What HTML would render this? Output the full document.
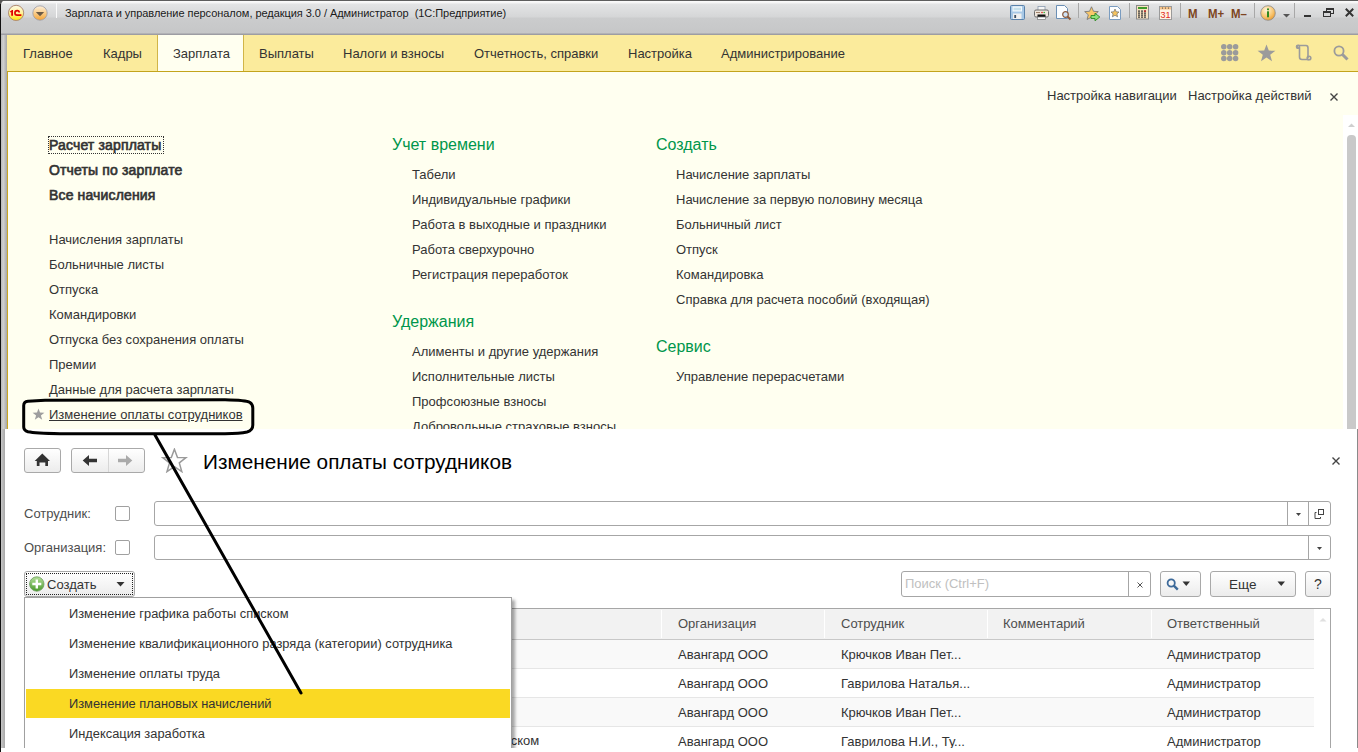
<!DOCTYPE html><html><head><meta charset="utf-8"><style>
*{margin:0;padding:0;box-sizing:border-box}
html,body{width:1358px;height:752px;overflow:hidden;background:#fff;font-family:"Liberation Sans", sans-serif}
.t{position:absolute;white-space:nowrap}
.a{position:absolute}
</style></head><body>
<div class="a" style="left:0;top:0;width:8px;height:8px;background:#555"></div>
<div class="a" style="left:1px;top:0;width:1357px;height:35px;border-top-left-radius:5px;background:linear-gradient(#5e5e5e 0px,#5e5e5e 1px,#fcfcfc 1px,#f4f4f4 3px,#e3e4e5 4px,#d5d6d7 17px,#cbcccd 18px,#c6c7c8 33px,#9d9da3 34px,#9d9da3 35px)"></div>
<div class="a" style="left:1px;top:35px;width:6px;height:394px;background:linear-gradient(90deg,#b9b9b9,#cfcfcf 40%,#a7a7a7)"></div>
<div class="a" style="left:0;top:4px;width:1px;height:748px;background:#111"></div>
<div class="a" style="left:7px;top:35px;width:1351px;height:36px;background:#fbeb9c"></div>
<div class="a" style="left:7px;top:71px;width:1351px;height:1px;background:#c3a41c"></div>
<div class="a" style="left:157px;top:35px;width:87px;height:36px;background:#fffff0;border-left:1px solid #d1b548;border-right:1px solid #d1b548"></div>
<div class="a" style="left:7px;top:72px;width:1351px;height:357px;background:#fffff0"></div>
<div class="a" style="left:7px;top:72px;width:1px;height:357px;background:#c9a623"></div>
<div class="t" style="left:65px;top:7.5px;font-size:11px;line-height:11px;font-weight:normal;color:#1a1a1a;letter-spacing:-0.05px">Зарплата и управление персоналом, редакция 3.0 / Администратор&nbsp;&nbsp;(1С:Предприятие)</div>
<div class="t" style="left:23px;top:47.0px;font-size:13px;line-height:13px;font-weight:normal;color:#333;">Главное</div>
<div class="t" style="left:103px;top:47.0px;font-size:13px;line-height:13px;font-weight:normal;color:#333;">Кадры</div>
<div class="t" style="left:173px;top:47.0px;font-size:13px;line-height:13px;font-weight:normal;color:#333;">Зарплата</div>
<div class="t" style="left:259px;top:47.0px;font-size:13px;line-height:13px;font-weight:normal;color:#333;">Выплаты</div>
<div class="t" style="left:343px;top:47.0px;font-size:13px;line-height:13px;font-weight:normal;color:#333;">Налоги и взносы</div>
<div class="t" style="left:474px;top:47.0px;font-size:13px;line-height:13px;font-weight:normal;color:#333;">Отчетность, справки</div>
<div class="t" style="left:628px;top:47.0px;font-size:13px;line-height:13px;font-weight:normal;color:#333;">Настройка</div>
<div class="t" style="left:721px;top:47.0px;font-size:13px;line-height:13px;font-weight:normal;color:#333;">Администрирование</div>
<div class="t" style="left:1047px;top:89.0px;font-size:13px;line-height:13px;font-weight:normal;color:#333;">Настройка навигации</div>
<div class="t" style="left:1188px;top:89.0px;font-size:13px;line-height:13px;font-weight:normal;color:#333;">Настройка действий</div>
<div class="t" style="left:49px;top:138.0px;font-size:14px;line-height:14px;font-weight:normal;color:#333;letter-spacing:0.15px;-webkit-text-stroke:0.65px #333">Расчет зарплаты</div>
<div class="a" style="left:48px;top:136px;width:116px;height:18px;border:1px dotted #333"></div>
<div class="t" style="left:49px;top:163.0px;font-size:14px;line-height:14px;font-weight:normal;color:#333;letter-spacing:0.15px;-webkit-text-stroke:0.65px #333">Отчеты по зарплате</div>
<div class="t" style="left:49px;top:188.0px;font-size:14px;line-height:14px;font-weight:normal;color:#333;letter-spacing:0.15px;-webkit-text-stroke:0.65px #333">Все начисления</div>
<div class="t" style="left:49px;top:233.0px;font-size:13px;line-height:13px;font-weight:normal;color:#333;">Начисления зарплаты</div>
<div class="t" style="left:49px;top:258.0px;font-size:13px;line-height:13px;font-weight:normal;color:#333;">Больничные листы</div>
<div class="t" style="left:49px;top:283.0px;font-size:13px;line-height:13px;font-weight:normal;color:#333;">Отпуска</div>
<div class="t" style="left:49px;top:308.0px;font-size:13px;line-height:13px;font-weight:normal;color:#333;">Командировки</div>
<div class="t" style="left:49px;top:333.0px;font-size:13px;line-height:13px;font-weight:normal;color:#333;">Отпуска без сохранения оплаты</div>
<div class="t" style="left:49px;top:358.0px;font-size:13px;line-height:13px;font-weight:normal;color:#333;">Премии</div>
<div class="t" style="left:49px;top:383.0px;font-size:13px;line-height:13px;font-weight:normal;color:#333;">Данные для расчета зарплаты</div>
<div class="t" style="left:49px;top:408.0px;font-size:13px;line-height:13px;font-weight:normal;color:#333;text-decoration:underline">Изменение оплаты сотрудников</div>
<div class="t" style="left:392px;top:136.5px;font-size:16px;line-height:16px;font-weight:normal;color:#00964b;">Учет времени</div>
<div class="t" style="left:412px;top:168.0px;font-size:13px;line-height:13px;font-weight:normal;color:#333;">Табели</div>
<div class="t" style="left:412px;top:193.0px;font-size:13px;line-height:13px;font-weight:normal;color:#333;">Индивидуальные графики</div>
<div class="t" style="left:412px;top:218.0px;font-size:13px;line-height:13px;font-weight:normal;color:#333;">Работа в выходные и праздники</div>
<div class="t" style="left:412px;top:243.0px;font-size:13px;line-height:13px;font-weight:normal;color:#333;">Работа сверхурочно</div>
<div class="t" style="left:412px;top:268.0px;font-size:13px;line-height:13px;font-weight:normal;color:#333;">Регистрация переработок</div>
<div class="t" style="left:392px;top:313.5px;font-size:16px;line-height:16px;font-weight:normal;color:#00964b;">Удержания</div>
<div class="t" style="left:412px;top:345.0px;font-size:13px;line-height:13px;font-weight:normal;color:#333;">Алименты и другие удержания</div>
<div class="t" style="left:412px;top:370.0px;font-size:13px;line-height:13px;font-weight:normal;color:#333;">Исполнительные листы</div>
<div class="t" style="left:412px;top:395.0px;font-size:13px;line-height:13px;font-weight:normal;color:#333;">Профсоюзные взносы</div>
<div class="t" style="left:412px;top:420.0px;font-size:13px;line-height:13px;font-weight:normal;color:#333;">Добровольные страховые взносы</div>
<div class="t" style="left:656px;top:136.5px;font-size:16px;line-height:16px;font-weight:normal;color:#00964b;">Создать</div>
<div class="t" style="left:676px;top:168.0px;font-size:13px;line-height:13px;font-weight:normal;color:#333;">Начисление зарплаты</div>
<div class="t" style="left:676px;top:193.0px;font-size:13px;line-height:13px;font-weight:normal;color:#333;">Начисление за первую половину месяца</div>
<div class="t" style="left:676px;top:218.0px;font-size:13px;line-height:13px;font-weight:normal;color:#333;">Больничный лист</div>
<div class="t" style="left:676px;top:243.0px;font-size:13px;line-height:13px;font-weight:normal;color:#333;">Отпуск</div>
<div class="t" style="left:676px;top:268.0px;font-size:13px;line-height:13px;font-weight:normal;color:#333;">Командировка</div>
<div class="t" style="left:676px;top:293.0px;font-size:13px;line-height:13px;font-weight:normal;color:#333;">Справка для расчета пособий (входящая)</div>
<div class="t" style="left:656px;top:338.5px;font-size:16px;line-height:16px;font-weight:normal;color:#00964b;">Сервис</div>
<div class="t" style="left:676px;top:370.0px;font-size:13px;line-height:13px;font-weight:normal;color:#333;">Управление перерасчетами</div>
<div class="a" style="left:5px;top:429px;width:1353px;height:323px;background:#fff"></div>
<div class="a" style="left:1px;top:429px;width:4px;height:319px;background:linear-gradient(90deg,#c6c6c6,#a9a9a9)"></div>
<div class="t" style="left:203px;top:451.0px;font-size:20.75px;line-height:21px;font-weight:normal;color:#000;">Изменение оплаты сотрудников</div>
<div class="t" style="left:24px;top:507.0px;font-size:13px;line-height:13px;font-weight:normal;color:#4d4d4d;">Сотрудник:</div>
<div class="t" style="left:24px;top:541.0px;font-size:13px;line-height:13px;font-weight:normal;color:#4d4d4d;">Организация:</div>
<svg class="a" style="left:7px;top:4px" width="18" height="18" viewBox="0 0 18 18"><defs><linearGradient id="g1c" x1="0" y1="0" x2="0" y2="1"><stop offset="0" stop-color="#fffbe6"/><stop offset="0.5" stop-color="#fff39a"/><stop offset="1" stop-color="#ffe500"/></linearGradient></defs><circle cx="9.1" cy="8.9" r="7.6" fill="url(#g1c)" stroke="#b08a72" stroke-width="1"/><path d="M3 7.6 L5 6 L6 6 L6 11.8 L4.2 11.8 L4.2 8 L3.3 8.4 Z" fill="#e00000"/><path d="M12.2 8.4 C12.2 7 11.2 6.6 10.2 6.6 C8.7 6.6 7.9 7.6 7.9 8.9 C7.9 10.3 8.9 11.1 10.1 11.1 L14.4 11.1" stroke="#e00000" stroke-width="1.6" fill="none"/></svg>
<svg class="a" style="left:32px;top:5px" width="16" height="16" viewBox="0 0 16 16"><defs><linearGradient id="gdd" x1="0" y1="0" x2="0" y2="1"><stop offset="0" stop-color="#fdf0dc"/><stop offset="0.5" stop-color="#f9cd8a"/><stop offset="1" stop-color="#f4a436"/></linearGradient></defs><circle cx="8" cy="8" r="7.2" fill="url(#gdd)" stroke="#9a9aa6" stroke-width="0.8"/><path d="M3.8 7 L12.2 7 L8 11.2 Z" fill="#6b5a45"/></svg>
<div class="a" style="left:56px;top:3px;width:1px;height:15px;background:#b0b0b0;border-right:1px solid #fafafa"></div>
<svg class="a" style="left:1010px;top:5px" width="16" height="16" viewBox="0 0 16 16"><rect x="0.5" y="0.5" width="14" height="14" rx="1" fill="#a7c8e6" stroke="#5a82ab"/><rect x="2.5" y="1.3" width="9.5" height="5.2" fill="#f4f9fd"/><rect x="3.5" y="2.8" width="7.5" height="0.8" fill="#a8cfe0"/><rect x="3.5" y="4.4" width="7.5" height="0.8" fill="#a8cfe0"/><rect x="3" y="8.5" width="8.5" height="5.5" fill="#f0f0f0"/><rect x="4.3" y="10" width="1.8" height="3" fill="#3d4f63"/></svg>
<svg class="a" style="left:1034px;top:6px" width="16" height="15" viewBox="0 0 16 15"><rect x="4" y="0.5" width="7" height="4.5" fill="#f6f6f6" stroke="#8a9bb0" stroke-width="0.8"/><rect x="0.5" y="4" width="14" height="7" rx="1.5" fill="#efe6dc" stroke="#6d6d6d" stroke-width="1"/><rect x="2" y="6" width="4" height="1" fill="#a0826a"/><circle cx="8" cy="6.5" r="0.8" fill="#e02020"/><circle cx="10.2" cy="6.5" r="0.8" fill="#30b030"/><rect x="3.5" y="8.5" width="8" height="2.5" fill="#111"/><rect x="3.5" y="11" width="8" height="2.5" fill="#fff" stroke="#777" stroke-width="0.7"/></svg>
<svg class="a" style="left:1056px;top:5px" width="16" height="16" viewBox="0 0 16 16"><path d="M0.5 0.5 L8.5 0.5 L11.5 3.5 L11.5 13.5 L0.5 13.5 Z" fill="#fbfdff" stroke="#6b8fb5" stroke-width="1"/><circle cx="9.5" cy="9.5" r="2.8" fill="#cfe3f7" stroke="#8b5a3c" stroke-width="1.2"/><path d="M11.5 11.5 L14.5 14.5" stroke="#8b5a3c" stroke-width="2"/></svg>
<div class="a" style="left:1078px;top:3px;width:1px;height:15px;background:#a8a8a8"></div>
<svg class="a" style="left:1084px;top:6px" width="17" height="16" viewBox="0 0 17 16"><path d="M7.5 0.8 L9.5 5.3 L14.3 5.6 L10.7 8.8 L11.9 13.5 L7.5 11 L3.1 13.5 L4.3 8.8 L0.7 5.6 L5.5 5.3 Z" fill="#f9c86a" stroke="#7a7a7a" stroke-width="0.9"/><path d="M7 9.5 L11 9.5 L11 7.2 L15.8 11 L11 14.8 L11 12.5 L7 12.5 Z" fill="#8fe07a" stroke="#2e8a22" stroke-width="0.9"/></svg>
<svg class="a" style="left:1109px;top:6px" width="13" height="15" viewBox="0 0 13 15"><path d="M0.5 0.5 L8.5 0.5 L11.5 3.5 L11.5 13.5 L0.5 13.5 Z" fill="#fdfeff" stroke="#7a9cc0" stroke-width="1"/><path d="M6 3 L7.2 5.8 L10 6 L7.9 7.9 L8.6 10.8 L6 9.3 L3.4 10.8 L4.1 7.9 L2 6 L4.8 5.8 Z" fill="#f6c45e" stroke="#707070" stroke-width="0.7"/></svg>
<div class="a" style="left:1129px;top:3px;width:1px;height:15px;background:#a8a8a8"></div>
<svg class="a" style="left:1136px;top:5px" width="13" height="15" viewBox="0 0 13 15"><rect x="0.5" y="0.5" width="12" height="13.5" fill="#f9e3c2" stroke="#8a8a8a" stroke-width="1"/><rect x="2" y="2" width="9" height="2" fill="#3f9a2a"/><rect x="2" y="5.5" width="2" height="1.2" fill="#333"/><rect x="5" y="5.5" width="2" height="1.2" fill="#333"/><rect x="8" y="5.5" width="2" height="1.2" fill="#333"/><rect x="2" y="7.5" width="2" height="1.2" fill="#333"/><rect x="5" y="7.5" width="2" height="1.2" fill="#333"/><rect x="8" y="7.5" width="2" height="1.2" fill="#333"/><rect x="2" y="9.5" width="2" height="1.2" fill="#333"/><rect x="5" y="9.5" width="2" height="1.2" fill="#333"/><rect x="8" y="9.5" width="2" height="1.2" fill="#333"/><rect x="2" y="11.5" width="2" height="1.2" fill="#333"/><rect x="5" y="11.5" width="2" height="1.2" fill="#333"/><rect x="8" y="11.5" width="2" height="1.2" fill="#333"/><rect x="8" y="5.5" width="2" height="1.2" fill="#e02020"/></svg>
<svg class="a" style="left:1159px;top:6px" width="13" height="14" viewBox="0 0 13 14"><rect x="0.5" y="0.5" width="12" height="13" fill="#fff4e6" stroke="#9a9a9a" stroke-width="1"/><rect x="1" y="1" width="11" height="2.5" fill="#f7c48a"/><circle cx="3.5" cy="2" r="0.6" fill="#333"/><circle cx="6.5" cy="2" r="0.6" fill="#333"/><circle cx="9.5" cy="2" r="0.6" fill="#333"/><text x="6.5" y="12" font-family="Liberation Sans" font-size="9" fill="#e02a1a" text-anchor="middle">31</text></svg>
<div class="a" style="left:1180px;top:3px;width:1px;height:15px;background:#a8a8a8"></div>
<div class="t" style="left:1188px;top:7.0px;font-size:13px;line-height:13px;font-weight:bold;color:#7d4521;transform:scaleX(0.88);transform-origin:0 0">M</div>
<div class="t" style="left:1208px;top:7.0px;font-size:13px;line-height:13px;font-weight:bold;color:#7d4521;transform:scaleX(0.88);transform-origin:0 0">M+</div>
<div class="t" style="left:1231px;top:7.0px;font-size:13px;line-height:13px;font-weight:bold;color:#7d4521;transform:scaleX(0.88);transform-origin:0 0">M&#8211;</div>
<div class="a" style="left:1254px;top:3px;width:1px;height:15px;background:#a8a8a8"></div>
<svg class="a" style="left:1260px;top:5px" width="16" height="17" viewBox="0 0 16 17"><defs><radialGradient id="gin" cx="0.4" cy="0.3" r="0.8"><stop offset="0" stop-color="#fff6dc"/><stop offset="0.6" stop-color="#f8c36b"/><stop offset="1" stop-color="#e8901f"/></radialGradient></defs><circle cx="8" cy="8" r="7.3" fill="url(#gin)" stroke="#8c8c8c" stroke-width="0.8"/><rect x="7" y="6.3" width="2" height="6" fill="#2f8a1f"/><circle cx="8" cy="4.3" r="1.1" fill="#2f8a1f"/></svg>
<svg class="a" style="left:1283px;top:14px" width="7" height="4" viewBox="0 0 7 4"><path d="M0 0 L7 0 L3.5 3.5 Z" fill="#555"/></svg>
<div class="a" style="left:1294px;top:3px;width:1px;height:15px;background:#a8a8a8"></div>
<div class="a" style="left:1304px;top:15px;width:7px;height:2px;background:#333"></div>
<div class="a" style="left:1326px;top:8px;width:8px;height:6px;border:1.5px solid #333;border-top-width:2px"></div>
<div class="a" style="left:1323px;top:11px;width:8px;height:6px;border:1.5px solid #333;border-top-width:2px;background:#d5d6d7"></div>
<svg class="a" style="left:1345px;top:8px" width="9" height="9" viewBox="0 0 9 9"><path d="M0.8 0.8 L8.2 8.2 M8.2 0.8 L0.8 8.2" stroke="#333" stroke-width="2"/></svg>
<svg class="a" style="left:1221px;top:44px" width="18" height="18" viewBox="0 0 18 18"><circle cx="2.8" cy="2.8" r="2.75" fill="#9b9b9b"/><circle cx="8.7" cy="2.8" r="2.75" fill="#9b9b9b"/><circle cx="14.600000000000001" cy="2.8" r="2.75" fill="#9b9b9b"/><circle cx="2.8" cy="8.7" r="2.75" fill="#9b9b9b"/><circle cx="8.7" cy="8.7" r="2.75" fill="#9b9b9b"/><circle cx="14.600000000000001" cy="8.7" r="2.75" fill="#9b9b9b"/><circle cx="2.8" cy="14.600000000000001" r="2.75" fill="#9b9b9b"/><circle cx="8.7" cy="14.600000000000001" r="2.75" fill="#9b9b9b"/><circle cx="14.600000000000001" cy="14.600000000000001" r="2.75" fill="#9b9b9b"/></svg>
<svg class="a" style="left:1257px;top:44px" width="19" height="18" viewBox="0 0 19 18"><path d="M9.5 0.6 L11.8 6.6 L18.4 6.8 L13.2 10.8 L15 17.3 L9.5 13.6 L4 17.3 L5.8 10.8 L0.6 6.8 L7.2 6.6 Z" fill="#9b9b9b"/></svg>
<svg class="a" style="left:1295px;top:44px" width="18" height="18" viewBox="0 0 18 18" fill="none" stroke="#9b9b9b" stroke-width="1.6"><path d="M3.5 1.5 L11 1.5 C12.5 1.5 13 2.5 13 4 L13 14" /><path d="M3.5 1.5 C2 1.5 1.5 3 2.5 4 L4.5 4 L4.5 13 C4.5 15 5.5 15.5 7 15.5 L14 15.5"/><circle cx="14" cy="14" r="1.8"/><circle cx="3" cy="2.8" r="1.5"/></svg>
<svg class="a" style="left:1333px;top:45px" width="17" height="17" viewBox="0 0 17 17" fill="none" stroke="#9b9b9b"><circle cx="6" cy="6" r="4.6" stroke-width="1.8"/><path d="M9.5 9.5 L14.5 14.5" stroke-width="3"/></svg>
<svg class="a" style="left:1330px;top:93px" width="8" height="8" viewBox="0 0 8 8"><path d="M0.5 0.5 L7.5 7.5 M7.5 0.5 L0.5 7.5" stroke="#444" stroke-width="1.4"/></svg>
<div class="a" style="left:1343px;top:115px;width:15px;height:314px;background:#fff"></div>
<svg class="a" style="left:1347px;top:122px" width="9" height="6" viewBox="0 0 9 6"><path d="M1 5 L4.5 1.5 L8 5 Z" fill="#cfcfcf"/></svg>
<div class="a" style="left:1347px;top:135px;width:9px;height:294px;background:#c9c9c9;border-radius:4px 4px 0 0"></div>
<svg class="a" style="left:32px;top:408px" width="13" height="13" viewBox="0 0 13 13"><path d="M6.5 0.5 L8 4.6 L12.4 4.7 L8.9 7.4 L10.2 11.8 L6.5 9.3 L2.8 11.8 L4.1 7.4 L0.6 4.7 L5 4.6 Z" fill="#9e9e9e"/></svg>
<div class="a" style="left:1357px;top:429px;width:1px;height:323px;background:#8a8a8a"></div>
<div class="a" style="left:24px;top:448px;width:37px;height:25px;background:linear-gradient(#ffffff,#ececec);border:1px solid #a9a9a9;border-radius:3px;"></div>
<svg class="a" style="left:34px;top:453px" width="17" height="14" viewBox="0 0 17 14"><path d="M8.3 0.5 L16 8 L14 8 L14 13 L11.3 13 L11.3 9.5 L5.5 9.5 L5.5 13 L2.8 13 L2.8 8 L0.7 8 Z" fill="#333"/></svg>
<div class="a" style="left:71px;top:448px;width:74px;height:25px;background:linear-gradient(#ffffff,#ececec);border:1px solid #a9a9a9;border-radius:3px;"></div>
<div class="a" style="left:108px;top:449px;width:1px;height:23px;background:#d6d6d6"></div>
<svg class="a" style="left:82px;top:454px" width="16" height="13" viewBox="0 0 16 13"><path d="M0.7 6.5 L7 1 L7 4.8 L15 4.8 L15 8.2 L7 8.2 L7 12 Z" fill="#333"/></svg>
<svg class="a" style="left:117px;top:454px" width="16" height="13" viewBox="0 0 16 13"><path d="M15.3 6.5 L9 1 L9 4.8 L1 4.8 L1 8.2 L9 8.2 L9 12 Z" fill="#aaa"/></svg>
<svg class="a" style="left:161px;top:448px" width="27" height="25" viewBox="0 0 27 25"><path d="M13.4 1.3 L16.5 9.4 L25 9.6 L18.3 14.9 L20.8 23.6 L13.4 18.6 L6 23.6 L8.5 14.9 L1.8 9.6 L10.3 9.4 Z" fill="#fff" stroke="#9a9a9a" stroke-width="1.5" stroke-linejoin="miter"/></svg>
<svg class="a" style="left:1332px;top:457px" width="8" height="8" viewBox="0 0 8 8"><path d="M0.5 0.5 L7.5 7.5 M7.5 0.5 L0.5 7.5" stroke="#444" stroke-width="1.4"/></svg>
<div class="a" style="left:115px;top:506px;width:15px;height:15px;border:1px solid #a0a0a0;border-radius:2px;background:#fff"></div>
<div class="a" style="left:115px;top:540px;width:15px;height:15px;border:1px solid #a0a0a0;border-radius:2px;background:#fff"></div>
<div class="a" style="left:154px;top:501px;width:1177px;height:25px;border:1px solid #a6a6a6;border-radius:3px;background:#fff;"></div>
<div class="a" style="left:1287px;top:502px;width:1px;height:23px;background:#a6a6a6"></div>
<div class="a" style="left:1308px;top:502px;width:1px;height:23px;background:#a6a6a6"></div>
<svg class="a" style="left:1296px;top:513px" width="5" height="3" viewBox="0 0 5 3"><path d="M0 0 L5 0 L2.5 3 Z" fill="#444"/></svg>
<svg class="a" style="left:1314px;top:509px" width="11" height="11" viewBox="0 0 11 11" fill="none" stroke="#444" stroke-width="1"><rect x="4.5" y="0.5" width="5" height="5"/><path d="M2.5 3.5 L1 3.5 L1 9.5 L6.5 9.5 L6.5 8"/></svg>
<div class="a" style="left:154px;top:535px;width:1177px;height:25px;border:1px solid #a6a6a6;border-radius:3px;background:#fff;"></div>
<div class="a" style="left:1308px;top:536px;width:1px;height:23px;background:#a6a6a6"></div>
<svg class="a" style="left:1317px;top:547px" width="5" height="3" viewBox="0 0 5 3"><path d="M0 0 L5 0 L2.5 3 Z" fill="#444"/></svg>
<div class="a" style="left:24px;top:571px;width:111px;height:26px;background:linear-gradient(#ffffff,#ececec);border:1px solid #a9a9a9;border-radius:3px;"></div>
<div class="a" style="left:26px;top:573px;width:107px;height:22px;border:1px dotted #222"></div>
<svg class="a" style="left:29px;top:576px" width="16" height="16" viewBox="0 0 16 16"><defs><linearGradient id="gpl" x1="0" y1="0" x2="0" y2="1"><stop offset="0" stop-color="#b5e09a"/><stop offset="1" stop-color="#4a9a2c"/></linearGradient></defs><circle cx="7.8" cy="8" r="7.2" fill="url(#gpl)" stroke="#6a9a5a" stroke-width="0.8"/><path d="M6.6 3.5 H9 V6.8 H12.3 V9.2 H9 V12.5 H6.6 V9.2 H3.3 V6.8 H6.6 Z" fill="#fff"/></svg>
<div class="t" style="left:47px;top:578.0px;font-size:13px;line-height:13px;font-weight:normal;color:#333;">Создать</div>
<svg class="a" style="left:116px;top:582px" width="9" height="5" viewBox="0 0 9 5"><path d="M0.5 0 L8.5 0 L4.5 4.5 Z" fill="#333"/></svg>
<div class="a" style="left:901px;top:571px;width:250px;height:26px;border:1px solid #a6a6a6;border-radius:3px;background:#fff;"></div>
<div class="a" style="left:1128px;top:572px;width:1px;height:24px;background:#a6a6a6"></div>
<div class="t" style="left:905px;top:577.0px;font-size:13px;line-height:13px;font-weight:normal;color:#c0c0c0;">Поиск (Ctrl+F)</div>
<svg class="a" style="left:1137px;top:582px" width="6" height="6" viewBox="0 0 6 6"><path d="M0.5 0.5 L5.5 5.5 M5.5 0.5 L0.5 5.5" stroke="#555" stroke-width="1"/></svg>
<div class="a" style="left:1160px;top:571px;width:41px;height:26px;background:linear-gradient(#ffffff,#ececec);border:1px solid #a9a9a9;border-radius:3px;"></div>
<svg class="a" style="left:1166px;top:578px" width="14" height="13" viewBox="0 0 14 13" fill="none" stroke="#3d6a9a"><circle cx="5.2" cy="5" r="3.6" stroke-width="1.8"/><path d="M7.8 7.6 L11.8 11.6" stroke-width="2.4"/></svg>
<svg class="a" style="left:1182px;top:581px" width="9" height="6" viewBox="0 0 9 6"><path d="M0.5 0.5 L8 0.5 L4.25 5 Z" fill="#333"/></svg>
<div class="a" style="left:1210px;top:571px;width:86px;height:26px;background:linear-gradient(#ffffff,#ececec);border:1px solid #a9a9a9;border-radius:3px;"></div>
<div class="t" style="left:1229px;top:577.5px;font-size:13.5px;line-height:14px;font-weight:normal;color:#333;">Еще</div>
<svg class="a" style="left:1277px;top:581px" width="9" height="6" viewBox="0 0 9 6"><path d="M0.5 0.5 L8 0.5 L4.25 5 Z" fill="#333"/></svg>
<div class="a" style="left:1305px;top:571px;width:26px;height:26px;background:linear-gradient(#ffffff,#ececec);border:1px solid #a9a9a9;border-radius:3px;"></div>
<div class="t" style="left:1314px;top:577.0px;font-size:14px;line-height:14px;font-weight:normal;color:#333;">?</div>
<div class="a" style="left:24px;top:608px;width:1307px;height:144px;border:1px solid #a6a6a6;border-bottom:none;background:#fff"></div>
<div class="a" style="left:25px;top:609px;width:1289px;height:31px;background:#f2f2f2;border-bottom:1px solid #c8c8c8"></div>
<div class="a" style="left:661px;top:610px;width:1px;height:28px;background:#d9d9d9;border-right:1px solid #fff"></div>
<div class="a" style="left:824px;top:610px;width:1px;height:28px;background:#d9d9d9;border-right:1px solid #fff"></div>
<div class="a" style="left:987px;top:610px;width:1px;height:28px;background:#d9d9d9;border-right:1px solid #fff"></div>
<div class="a" style="left:1151px;top:610px;width:1px;height:28px;background:#d9d9d9;border-right:1px solid #fff"></div>
<svg class="a" style="left:1319px;top:617px" width="8" height="5" viewBox="0 0 8 5"><path d="M0.5 4.5 L4 1 L7.5 4.5 Z" fill="#e0e0e0"/></svg>
<div class="t" style="left:678px;top:617.0px;font-size:13px;line-height:13px;font-weight:normal;color:#4d4d4d;">Организация</div>
<div class="t" style="left:841px;top:617.0px;font-size:13px;line-height:13px;font-weight:normal;color:#4d4d4d;">Сотрудник</div>
<div class="t" style="left:1003px;top:617.0px;font-size:13px;line-height:13px;font-weight:normal;color:#4d4d4d;">Комментарий</div>
<div class="t" style="left:1167px;top:617.0px;font-size:13px;line-height:13px;font-weight:normal;color:#4d4d4d;">Ответственный</div>
<div class="a" style="left:25px;top:640px;width:1289px;height:29px;background:#f9f9f9;border-bottom:1px solid #e6e6e6"></div>
<div class="t" style="left:678px;top:648.0px;font-size:13px;line-height:13px;font-weight:normal;color:#333;">Авангард ООО</div>
<div class="t" style="left:841px;top:648.0px;font-size:13px;line-height:13px;font-weight:normal;color:#333;">Крючков Иван Пет...</div>
<div class="t" style="left:1167px;top:648.0px;font-size:13px;line-height:13px;font-weight:normal;color:#333;">Администратор</div>
<div class="a" style="left:25px;top:669px;width:1289px;height:29px;background:#fff;border-bottom:1px solid #e6e6e6"></div>
<div class="t" style="left:678px;top:677.0px;font-size:13px;line-height:13px;font-weight:normal;color:#333;">Авангард ООО</div>
<div class="t" style="left:841px;top:677.0px;font-size:13px;line-height:13px;font-weight:normal;color:#333;">Гаврилова Наталья...</div>
<div class="t" style="left:1167px;top:677.0px;font-size:13px;line-height:13px;font-weight:normal;color:#333;">Администратор</div>
<div class="a" style="left:25px;top:698px;width:1289px;height:29px;background:#f9f9f9;border-bottom:1px solid #e6e6e6"></div>
<div class="t" style="left:678px;top:706.0px;font-size:13px;line-height:13px;font-weight:normal;color:#333;">Авангард ООО</div>
<div class="t" style="left:841px;top:706.0px;font-size:13px;line-height:13px;font-weight:normal;color:#333;">Крючков Иван Пет...</div>
<div class="t" style="left:1167px;top:706.0px;font-size:13px;line-height:13px;font-weight:normal;color:#333;">Администратор</div>
<div class="a" style="left:25px;top:727px;width:1289px;height:29px;background:#fff;border-bottom:1px solid #e6e6e6"></div>
<div class="t" style="left:678px;top:735.0px;font-size:13px;line-height:13px;font-weight:normal;color:#333;">Авангард ООО</div>
<div class="t" style="left:841px;top:735.0px;font-size:13px;line-height:13px;font-weight:normal;color:#333;">Гаврилова Н.И., Ту...</div>
<div class="t" style="left:1167px;top:735.0px;font-size:13px;line-height:13px;font-weight:normal;color:#333;">Администратор</div>
<div class="t" style="left:317px;top:734.0px;font-size:13px;line-height:13px;font-weight:normal;color:#333;">Изменение графика работы списком</div>
<div class="a" style="left:24px;top:597px;width:488px;height:151px;background:#fff;border:1px solid #a0a0a0;border-bottom:none;box-shadow:3px 3px 3px rgba(0,0,0,0.35)"></div>
<div class="a" style="left:26px;top:689px;width:484px;height:29px;background:#fad923"></div>
<div class="t" style="left:69px;top:607.0px;font-size:12.85px;line-height:13px;font-weight:normal;color:#333;">Изменение графика работы списком</div>
<div class="t" style="left:69px;top:637.0px;font-size:12.85px;line-height:13px;font-weight:normal;color:#333;">Изменение квалификационного разряда (категории) сотрудника</div>
<div class="t" style="left:69px;top:667.0px;font-size:12.85px;line-height:13px;font-weight:normal;color:#333;">Изменение оплаты труда</div>
<div class="t" style="left:69px;top:697.0px;font-size:12.85px;line-height:13px;font-weight:normal;color:#333;">Изменение плановых начислений</div>
<div class="t" style="left:69px;top:727.0px;font-size:12.85px;line-height:13px;font-weight:normal;color:#333;">Индексация заработка</div>
<div class="a" style="left:1px;top:748px;width:1357px;height:4px;background:#fff"></div>
<svg class="a" style="left:0;top:380px" width="360" height="372" viewBox="0 380 360 372" fill="none" stroke="#000" stroke-width="3" stroke-linecap="round" stroke-linejoin="round"><path d="M23.7 427 L23.7 405.5 Q23.7 401.8 28 401.3 L45 400.2 L225 399.8 Q246 400.2 250 402.5 Q252.8 404.5 252.8 408 L252.8 425 Q252.8 430.5 247 432 Q240 433.5 225 433.7 L60 433.7 Q35 433.3 28 431.8 Q23.7 430.5 23.7 427 Z"/><path d="M155 435 L301 693"/></svg>
</body></html>
